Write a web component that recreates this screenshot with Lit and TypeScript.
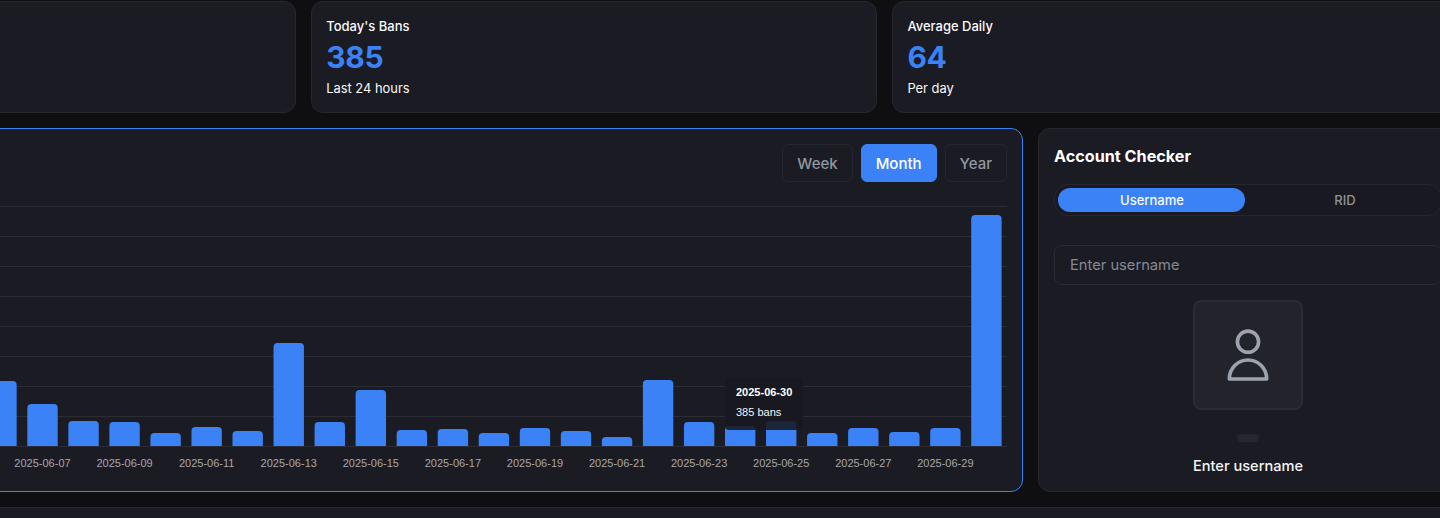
import { LitElement, html, css, svg } from "lit";
import { customElement } from "lit/decorators.js";

const tops = [381, 404, 421, 422, 433, 427, 431, 343, 422, 390, 430, 429, 433, 428, 431, 437, 380, 422, 426, 421, 433, 428, 432, 428, 215];
const labels = ["07", "09", "11", "13", "15", "17", "19", "21", "23", "25", "27", "29"];
const OFFSET = 270;
const BASE = 446 - 128;

@customElement("app-root")
export class AppRoot extends LitElement {
  static styles = css`
    :host { display: block; width: 1440px; height: 518px; overflow: hidden; background: #0f0f12; font-family: Inter, "Liberation Sans", sans-serif; }
    .page { width: 1728px; margin-left: -270px; margin-top: 1px; display: flex; flex-direction: column; gap: 15px; }
    .stats { display: grid; grid-template-columns: repeat(3, 566.2px); gap: 15px; }
    .card { box-sizing: border-box; background: #1a1b23; border: 1px solid #27272f; border-radius: 12px; }
    .stat { height: 112px; padding: 14px 14px; display: flex; flex-direction: column; }
    .stat-title { font-size: 13px; line-height: 20px; font-weight: 500; color: #fafafa; }
    .stat-value { font-size: 30px; line-height: 36px; font-weight: 700; letter-spacing: -0.3px; color: #3b82f6; margin-top: 3px; }
    .stat-sub { font-size: 12.9px; line-height: 20px; font-weight: 400; color: #fafafa; margin-top: 4px; }
    .main { display: grid; grid-template-columns: 1293px 420px; grid-template-rows: 364px; gap: 15px; }
    .chart { position: relative; border-color: #3b82f6; overflow: hidden; }
    .chart svg { display: block; position: absolute; left: -1px; top: -1px; }
    .range { position: absolute; right: 15px; top: 15px; display: flex; gap: 8px; }
    .range button { font: 500 15px/20px Inter, sans-serif; height: 38px; padding: 1px 14px 0; border-radius: 6px; background: transparent; border: 1px solid #25262e; color: #9297a1; }
    .range button.on { background: #3b82f6; border-color: #3b82f6; color: #fff; }
    .tip { position: absolute; left: 994px; top: 249px; width: 78px; height: 52px; box-sizing: border-box; padding: 4px 11px; border-radius: 4px; background: rgba(24,25,32,.88); font: 11px/20px "Liberation Sans", Arial, sans-serif; color: #f4f4f5; white-space: nowrap; }
    .tip b { display: block; font-weight: 700; color: #fff; }
    .checker { padding: 15px 15px 0; display: flex; flex-direction: column; }
    .checker > * { flex-shrink: 0; }
    .checker h3 { margin: 0; font-size: 16.2px; line-height: 24px; font-weight: 700; color: #fff; }
    .tabs { box-sizing: border-box; margin-top: 16px; height: 32px; border: 1px solid #27272f; border-radius: 14px; padding: 3px; display: grid; grid-template-columns: 187px 200px; background: #191a21; }
    .tabs span { font-size: 13px; font-weight: 500; line-height: 24px; text-align: center; color: #8f929b; border-radius: 12px; }
    .tabs span.on { background: #3b82f6; color: #fafafa; padding-left: 1px; }
    .input { box-sizing: border-box; margin-top: 29px; height: 40px; border: 1px solid #2a2b33; border-radius: 8px; padding: 0 15px; font-size: 14.7px; line-height: 38px; color: #858993; }
    .avatar { box-sizing: border-box; align-self: center; margin-top: 15px; width: 110px; height: 110px; background: #22232b; border: 2px solid #2a2b33; border-radius: 8px; display: flex; align-items: center; justify-content: center; }
    .pill { align-self: center; margin-top: 24px; width: 22px; height: 8px; border-radius: 4px; background: #25262e; }
    .name { text-align: center; margin-top: 12px; font-size: 14.6px; line-height: 24px; font-weight: 500; color: #f4f4f5; }
    .footer { height: 60px; }
  `;

  private chart() {
    const grid = [];
    for (let y = 206; y <= 446; y += 30) {
      grid.push(svg`<line x1="0" x2="${1007 + OFFSET}" y1="${y - 127.5}" y2="${y - 127.5}" stroke="#2c2d34" />`);
    }
    const bars = tops.map((t, i) => {
      const x = -13.74 + i * 41.04 + OFFSET;
      const h = 446 - t;
      const r = Math.min(4, h);
      return svg`<path d="M${x} ${BASE}V${t - 128 + r}a${r} ${r} 0 0 1 ${r} -${r}H${x + 30.4 - r}a${r} ${r} 0 0 1 ${r} ${r}V${BASE}Z" fill="#3b82f6" />`;
    });
    const texts = labels.map((d, i) => svg`<text x="${42.5 + i * 82.08 + OFFSET}" y="339" text-anchor="middle" fill="#a6a8af" font-family="Liberation Sans, Arial, sans-serif" font-size="11">2025-06-${d}</text>`);
    return svg`<svg width="1293" height="364" viewBox="0 0 1293 364">${grid}${bars}${texts}</svg>`;
  }

  render() {
    return html`<div class="page">
      <div class="stats">
        <div class="card stat"></div>
        <div class="card stat">
          <div class="stat-title">Today's Bans</div>
          <div class="stat-value">385</div>
          <div class="stat-sub">Last 24 hours</div>
        </div>
        <div class="card stat">
          <div class="stat-title">Average Daily</div>
          <div class="stat-value">64</div>
          <div class="stat-sub">Per day</div>
        </div>
      </div>
      <div class="main">
        <div class="card chart">
          ${this.chart()}
          <div class="range">
            <button>Week</button>
            <button class="on">Month</button>
            <button>Year</button>
          </div>
          <div class="tip"><b>2025-06-30</b>385 bans</div>
        </div>
        <div class="card checker">
          <h3>Account Checker</h3>
          <div class="tabs"><span class="on">Username</span><span>RID</span></div>
          <div class="input">Enter username</div>
          <div class="avatar">
            <svg width="48" height="60" viewBox="0 0 48 60" fill="none" stroke="#9ca3af" stroke-width="3.6" stroke-linejoin="round">
              <circle cx="24" cy="16.7" r="10.6" />
              <path d="M5.3 54a18.7 19 0 0 1 37.4 0Z" />
            </svg>
          </div>
          <div class="pill"></div>
          <div class="name">Enter username</div>
        </div>
      </div>
      <div class="card footer"></div>
    </div>`;
  }
}
